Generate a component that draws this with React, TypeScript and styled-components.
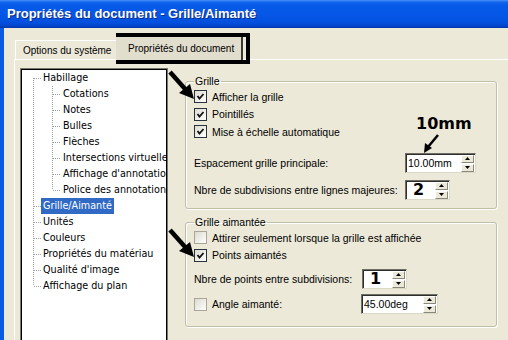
import React from 'react'
import styled, { createGlobalStyle } from 'styled-components'

const GlobalStyle = createGlobalStyle`
  html, body {
    margin: 0;
    padding: 0;
    background: #ece9d8;
  }
  body {
    font-family: 'Liberation Sans', Arial, sans-serif;
  }
`

type TreeItem = {
  label: string
  level: 0 | 1
  first?: boolean
  last?: boolean
  selected?: boolean
}

const treeItems: TreeItem[] = [
  { label: 'Habillage', level: 0, first: true },
  { label: 'Cotations', level: 1, first: true },
  { label: 'Notes', level: 1 },
  { label: 'Bulles', level: 1 },
  { label: 'Flèches', level: 1 },
  { label: 'Intersections virtuelles', level: 1 },
  { label: "Affichage d'annotations", level: 1 },
  { label: 'Police des annotations', level: 1, last: true },
  { label: 'Grille/Aimanté', level: 0, selected: true },
  { label: 'Unités', level: 0 },
  { label: 'Couleurs', level: 0 },
  { label: 'Propriétés du matériau', level: 0 },
  { label: "Qualité d'image", level: 0 },
  { label: 'Affichage du plan', level: 0, last: true },
]

// dotted tree guides for one row
const TreeLines = ({ item }: { item: TreeItem }) => {
  const w = item.level === 0 ? 19 : 39
  const dots = { stroke: '#a0a0a0', strokeWidth: 1, strokeDasharray: '1 1' }
  return (
    <svg width={w} height={16} style={{ flex: 'none' }}>
      {item.level === 0 ? (
        <>
          <line x1={11.5} y1={item.first ? 8 : 0} x2={11.5} y2={item.last ? 8 : 16} {...dots} />
          <line x1={12} y1={8.5} x2={19} y2={8.5} {...dots} />
        </>
      ) : (
        <>
          <line x1={11.5} y1={0} x2={11.5} y2={16} {...dots} />
          <line x1={30.5} y1={0} x2={30.5} y2={item.last ? 8 : 16} {...dots} />
          <line x1={31} y1={8.5} x2={39} y2={8.5} {...dots} />
        </>
      )}
    </svg>
  )
}

const Check = ({ checked }: { checked?: boolean }) => (
  <CheckBox $checked={checked}>
    {checked && (
      <svg width={11} height={11} viewBox="0 0 11 11">
        <path d="M2.5 5 L4.5 7.5 L8.5 3" fill="none" stroke="#111" strokeWidth={1.8} />
      </svg>
    )}
  </CheckBox>
)

const Spinner = ({ value, width, big }: { value: string; width: number; big?: boolean }) => (
  <SpinField $width={width}>
    <SpinValue $big={big}>{value}</SpinValue>
    <SpinButtons>
      <SpinButton>
        <svg width={5} height={3}>
          <path d="M2.5 0 L5 3 L0 3 Z" fill="#000" />
        </svg>
      </SpinButton>
      <SpinButton>
        <svg width={5} height={3}>
          <path d="M0 0 L5 0 L2.5 3 Z" fill="#000" />
        </svg>
      </SpinButton>
    </SpinButtons>
  </SpinField>
)

export default function App() {
  return (
    <Window>
      <GlobalStyle />
      <TitleBar>Propriétés du document - Grille/Aimanté</TitleBar>
      <Body>
        <Content>
          <TabStrip>
            <Tab>Options du système</Tab>
            <ActiveTab>Propriétés du document</ActiveTab>
          </TabStrip>
          <TabPage>
            <Tree>
              {treeItems.map(item => (
                <TreeRow key={item.label}>
                  <TreeLines item={item} />
                  <TreeLabel $selected={item.selected}>{item.label}</TreeLabel>
                </TreeRow>
              ))}
            </Tree>
            <Options>
              <Group>
                <Legend>Grille</Legend>
                <CheckRow>
                  <Check checked />
                  Afficher la grille
                </CheckRow>
                <CheckRow>
                  <Check checked />
                  Pointillés
                </CheckRow>
                <CheckRow>
                  <Check checked />
                  Mise à échelle automatique
                </CheckRow>
                <FieldRow $labelWidth={211} $gap={12.5}>
                  <span>Espacement grille principale:</span>
                  <Spinner value="10.00mm" width={71} />
                </FieldRow>
                <FieldRow $labelWidth={211} $gap={7}>
                  <span>Nbre de subdivisions entre lignes majeures:</span>
                  <Spinner value="2" width={45} big />
                </FieldRow>
              </Group>
              <Group $second>
                <Legend>Grille aimantée</Legend>
                <CheckRow>
                  <Check />
                  Attirer seulement lorsque la grille est affichée
                </CheckRow>
                <CheckRow>
                  <Check checked />
                  Points aimantés
                </CheckRow>
                <FieldRow $labelWidth={168} $gap={5}>
                  <span>Nbre de points entre subdivisions:</span>
                  <Spinner value="1" width={45} big />
                </FieldRow>
                <FieldRow $labelWidth={167} $gap={5}>
                  <CheckLabel>
                    <Check />
                    Angle aimanté:
                  </CheckLabel>
                  <Spinner value="45.00deg" width={77} />
                </FieldRow>
              </Group>
            </Options>
          </TabPage>
        </Content>
      </Body>

      {/* hand-drawn annotations over the dialog */}
      <Annotations width={508} height={340}>
        <rect x={118} y={35} width={130} height={27} fill="none" stroke="#000" strokeWidth={4} />
        <line x1={170} y1={72} x2={186} y2={90} stroke="#000" strokeWidth={4.5} />
        <path d="M194 99 L179 93 L190 84 Z" fill="#000" />
        <line x1={170} y1={230} x2={186} y2={248} stroke="#000" strokeWidth={4.5} />
        <path d="M194 257 L179 251 L190 242 Z" fill="#000" />
        <line x1={438} y1={135} x2={428} y2={147} stroke="#000" strokeWidth={2.5} />
        <path d="M424 153 L425 143 L432 148 Z" fill="#000" />
      </Annotations>
      <Callout>10mm</Callout>
    </Window>
  )
}

const Window = styled.div`
  position: relative;
  width: 508px;
  height: 340px;
  overflow: hidden;
  display: flex;
  flex-direction: column;
  background: #ece9d8;
  font-size: 10.5px;
  color: #000;
`

const TitleBar = styled.div`
  flex: none;
  height: 28px;
  display: flex;
  align-items: center;
  padding: 0 0 1px 7px;
  box-sizing: border-box;
  background: linear-gradient(
    #4a94f8 0,
    #1667ee 2px,
    #075ae8 5px,
    #0556e6 55%,
    #0350de 80%,
    #0246cc 92%,
    #0035a8 100%
  );
  color: #fff;
  font: bold 13px 'Liberation Sans', Arial, sans-serif;
  text-shadow: 1px 1px 0 #0b2a8a;
  white-space: nowrap;
`

const Body = styled.div`
  flex: 1;
  display: flex;
  min-height: 0;
  border-left: 4px solid #0a5be4;
`

const Content = styled.div`
  flex: 1;
  display: flex;
  flex-direction: column;
  min-width: 0;
  padding-left: 10px;
`

const TabStrip = styled.div`
  flex: none;
  height: 31px;
  display: flex;
  align-items: flex-end;
  padding-left: 1px;
`

const Tab = styled.div`
  height: 19px;
  width: 101px;
  box-sizing: border-box;
  padding: 4px 0 0 7px;
  border-top: 1px solid #fff;
  border-left: 1px solid #fff;
  background: #ece9d8;
  font-size: 10px;
  white-space: nowrap;
`

const ActiveTab = styled.div`
  height: 23px;
  width: 127px;
  margin-bottom: -1px;
  box-sizing: border-box;
  padding: 6px 0 0 12px;
  background: #e2dece;
  border-right: 2px solid #3a3a30;
  font-size: 10px;
  white-space: nowrap;
  position: relative;
  z-index: 1;
`

const TabPage = styled.div`
  flex: 1;
  display: flex;
  align-items: flex-start;
  gap: 17px;
  min-height: 0;
  padding: 8px 0 0 5px;
  border-top: 1px solid #fff;
  border-left: 1px solid #fff;
`

const Tree = styled.div`
  flex: none;
  width: 148px;
  height: 290px;
  box-sizing: border-box;
  padding-top: 1px;
  overflow: hidden;
  background: #fff;
  border: 1px solid #7a7a72;
  box-shadow: inset 1px 1px 0 #000, inset -1px 0 0 #000;
  font-family: 'DejaVu Sans Condensed', 'DejaVu Sans', sans-serif;
  font-stretch: condensed;
  font-size: 10.7px;
`

const TreeRow = styled.div`
  height: 16px;
  display: flex;
  align-items: center;
  padding-left: 1px;
  white-space: nowrap;
`

const TreeLabel = styled.span<{ $selected?: boolean }>`
  height: 16px;
  line-height: 16px;
  padding: 0 2px;
  background: ${p => (p.$selected ? '#316ac5' : 'transparent')};
  color: ${p => (p.$selected ? '#fff' : '#000')};
`

const Options = styled.div`
  flex: none;
  width: 312px;
  margin-top: 7px;
  display: flex;
  flex-direction: column;
`

const Group = styled.fieldset<{ $second?: boolean }>`
  margin: ${p => (p.$second ? '7px' : '0')} 0 0;
  padding: 1px 8px ${p => (p.$second ? '12px' : '8px')};
  border: 1px solid #c0bea9;
  border-radius: 3px;
  box-shadow: 1px 1px 0 #fff, inset 1px 1px 0 #fff;
  min-width: 0;
`

const Legend = styled.legend`
  padding: 0 1px;
  font-size: 10.5px;
  line-height: 12px;
`

const CheckRow = styled.div`
  height: 17.5px;
  display: flex;
  align-items: center;
  gap: 5px;
  white-space: nowrap;
`

const CheckLabel = styled.span`
  display: flex;
  align-items: center;
  gap: 5px;
`

const CheckBox = styled.span<{ $checked?: boolean }>`
  flex: none;
  width: 13px;
  height: 13px;
  box-sizing: border-box;
  display: flex;
  align-items: center;
  justify-content: center;
  border: 1px solid ${p => (p.$checked ? '#27323c' : '#a8a698')};
  background: linear-gradient(135deg, #dcdad0, #fff);
`

const FieldRow = styled.div<{ $labelWidth: number; $gap: number }>`
  display: grid;
  grid-template-columns: ${p => p.$labelWidth}px auto;
  align-items: center;
  justify-content: start;
  margin-top: ${p => p.$gap}px;
  white-space: nowrap;
`

const SpinField = styled.div<{ $width: number }>`
  width: ${p => p.$width}px;
  height: 20px;
  box-sizing: border-box;
  display: flex;
  align-items: center;
  justify-content: space-between;
  padding: 0 1px 0 2px;
  background: #fff;
  border: 1px solid;
  border-color: #6e6e66 #dcd8c8 #dcd8c8 #6e6e66;
  box-shadow: inset 1px 1px 0 #2e2e2a;
`

const SpinValue = styled.span<{ $big?: boolean }>`
  padding-left: ${p => (p.$big ? '5px' : '0')};
  font-family: ${p => (p.$big ? "'DejaVu Sans', sans-serif" : "'Liberation Sans', Arial, sans-serif")};
  font-weight: ${p => (p.$big ? 'bold' : 'normal')};
  font-size: ${p => (p.$big ? '16px' : '10.5px')};
  line-height: 16px;
`

const SpinButtons = styled.div`
  display: flex;
  flex-direction: column;
  gap: 1px;
`

const SpinButton = styled.span`
  width: 13px;
  height: 8px;
  box-sizing: border-box;
  display: flex;
  align-items: center;
  justify-content: center;
  background: #ece9d8;
  border: 1px solid;
  border-color: #fff #8a887c #8a887c #fff;
`

const Annotations = styled.svg`
  position: absolute;
  left: 0;
  top: 0;
  pointer-events: none;
`

const Callout = styled.div`
  position: absolute;
  left: 416px;
  top: 116px;
  font: bold 16px 'DejaVu Sans', sans-serif;
  line-height: 16px;
`
